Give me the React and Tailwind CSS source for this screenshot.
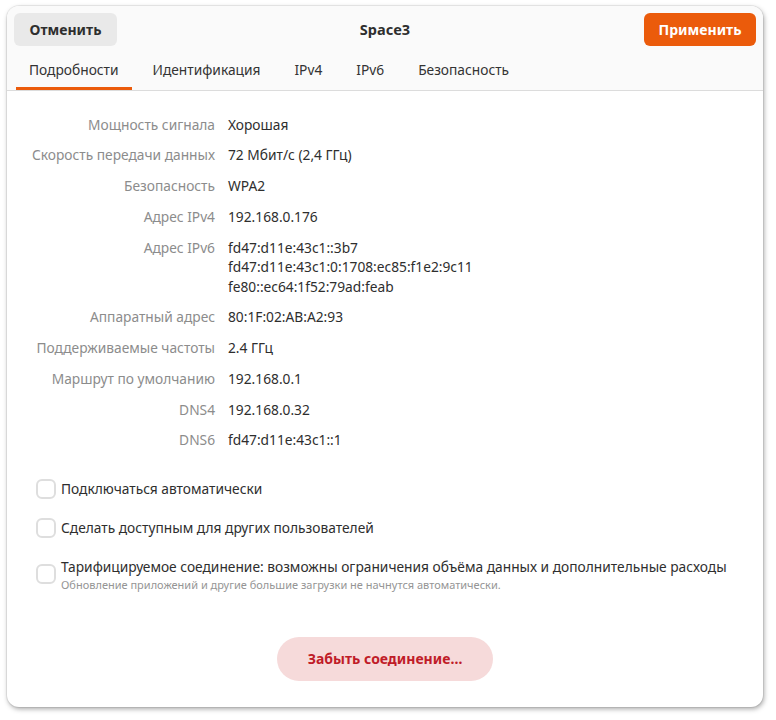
import React from 'react';

const rows = [
  ['Мощность сигнала', ['Хорошая']],
  ['Скорость передачи данных', ['72 Мбит/с (2,4 ГГц)']],
  ['Безопасность', ['WPA2']],
  ['Адрес IPv4', ['192.168.0.176']],
  ['Адрес IPv6', ['fd47:d11e:43c1::3b7', 'fd47:d11e:43c1:0:1708:ec85:f1e2:9c11', 'fe80::ec64:1f52:79ad:feab']],
  ['Аппаратный адрес', ['80:1F:02:AB:A2:93']],
  ['Поддерживаемые частоты', ['2.4 ГГц']],
  ['Маршрут по умолчанию', ['192.168.0.1']],
  ['DNS4', ['192.168.0.32']],
  ['DNS6', ['fd47:d11e:43c1::1']],
];

const tabs = ['Подробности', 'Идентификация', 'IPv4', 'IPv6', 'Безопасность'];

function Checkbox() {
  return <span className="w-[20px] h-[20px] shrink-0 rounded-[6px] border-2 border-[#dedede] bg-white" />;
}

export default function App() {
  return (
    <div className="w-[776px] h-[720px] bg-white pt-[6px] pl-[7px]" style={{ fontFamily: '"Noto Sans", sans-serif' }}>
      <div className="w-[756px] h-[701px] rounded-[12px] bg-white overflow-hidden flex flex-col shadow-[1px_2px_5px_rgba(0,0,0,0.35),0_0_0_1px_rgba(0,0,0,0.06)]">
        <div className="bg-[#fafafa] border-b border-[#dcdcdc]">
          <div className="grid grid-cols-[1fr_auto_1fr] items-center px-[7px] pt-[7px]">
            <button className="justify-self-start w-[103px] h-[33px] rounded-[6px] bg-[#e9e9e9] text-[14px] font-bold text-[#2e2e2e]">Отменить</button>
            <div className="text-[14.5px] font-bold text-[#2e2e2e]">Space3</div>
            <button className="justify-self-end w-[112px] h-[33px] rounded-[6px] bg-[#eb5b0b] text-[14px] font-bold text-white">Применить</button>
          </div>
          <div className="flex px-[9px] mt-[10px]">
            {tabs.map((t, i) => (
              <div key={t} className={`px-[13px] pt-[4px] pb-[6px] text-[13.75px] text-[#333] border-b-[3px] ${i === 0 ? 'border-[#eb5b0b]' : 'border-transparent'} mr-[8px]`}>
                {t}
              </div>
            ))}
          </div>
        </div>

        <div className="flex-1 flex flex-col text-[13.75px]">
          <div className="pt-[24px] flex flex-col gap-[11.25px]">
            {rows.map(([label, vals]) => (
              <div key={label} className="flex gap-[13px] leading-[19.5px]">
                <div className="w-[208px] text-right text-[#8c8c8c]">{label}</div>
                <div className="flex flex-col text-[#2e2e2e]">
                  {vals.map((v) => <span key={v}>{v}</span>)}
                </div>
              </div>
            ))}
          </div>

          <div className="flex flex-col pl-[29px] mt-[29px] gap-[19px] text-[#2e2e2e]">
            <label className="flex items-center gap-[5px] h-[20px]"><Checkbox />Подключаться автоматически</label>
            <label className="flex items-center gap-[5px] h-[20px]"><Checkbox />Сделать доступным для других пользователей</label>
            <label className="flex items-center gap-[5px]">
              <Checkbox />
              <span className="flex flex-col">
                <span className="leading-[20px]">Тарифицируемое соединение: возможны ограничения объёма данных и дополнительные расходы</span>
                <span className="text-[11px] leading-[15px] text-[#959595]">Обновление приложений и другие большие загрузки не начнутся автоматически.</span>
              </span>
            </label>
          </div>

          <div className="flex justify-center mt-[45px]">
            <button className="w-[216px] h-[44px] rounded-full bg-[#f6dada] text-[#c01c28] font-bold text-[14px]">Забыть соединение…</button>
          </div>
        </div>
      </div>
    </div>
  );
}
